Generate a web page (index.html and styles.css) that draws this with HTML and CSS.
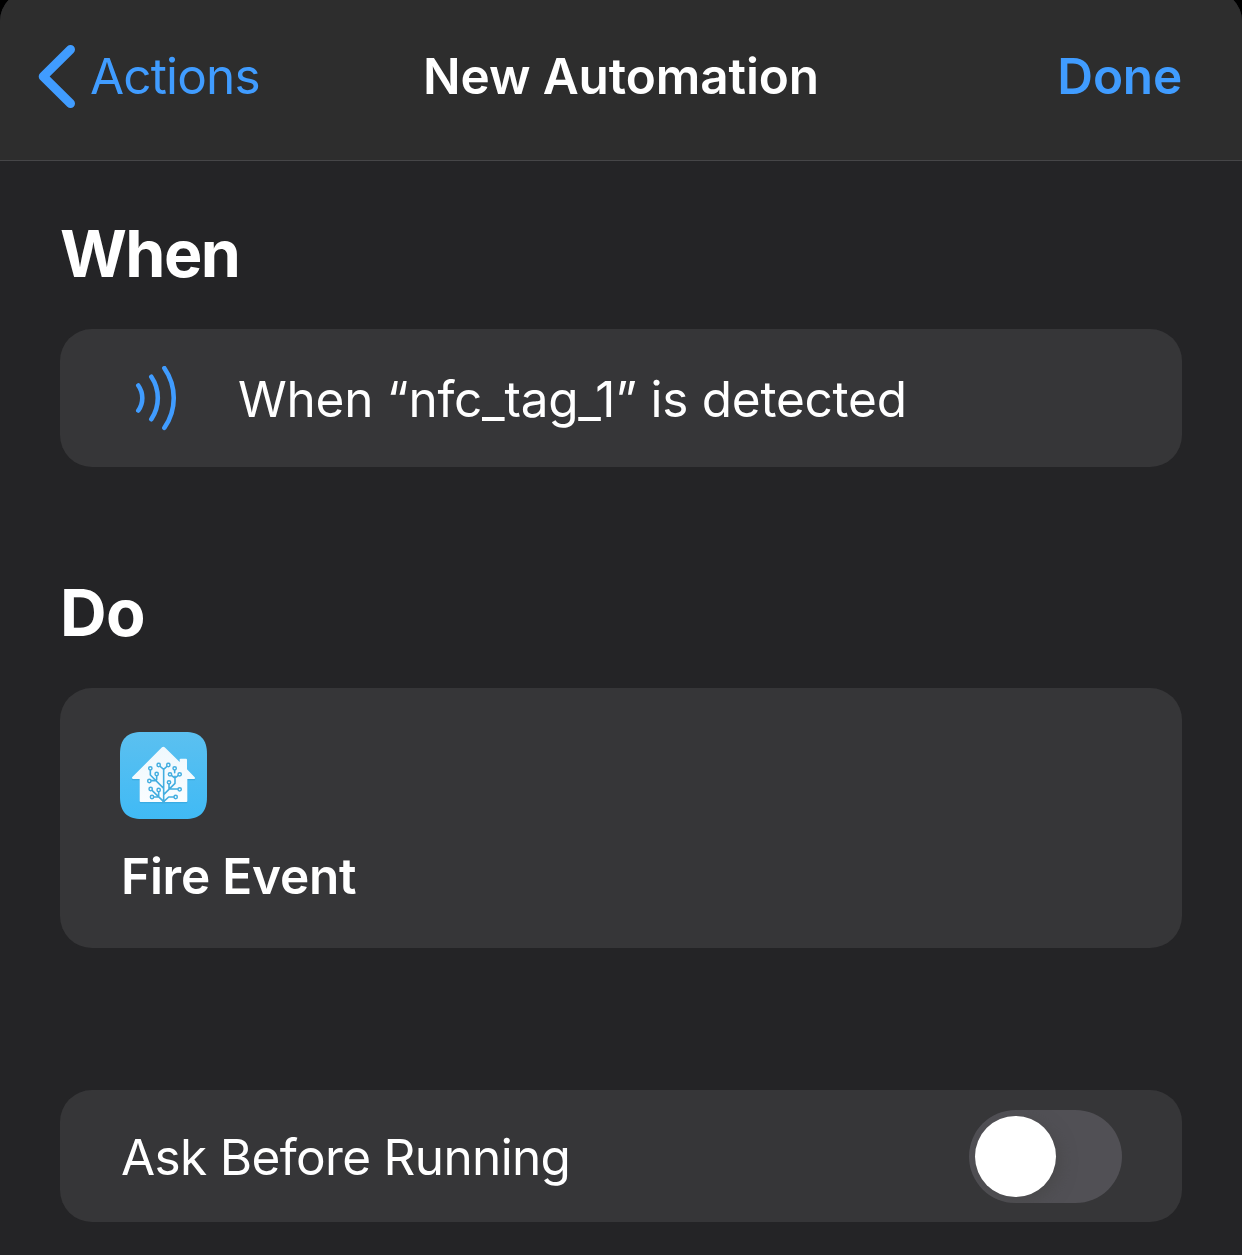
FILE: index.html
```html
<!DOCTYPE html>
<html lang="en">
<head>
<meta charset="utf-8">
<title>New Automation</title>
<link rel="stylesheet" href="styles.css">
</head>
<body>
<div class="sheet">
  <header class="navbar">
    <a class="back">
      <svg class="back-icon" viewBox="0 0 38 64" fill="none" stroke="currentColor" stroke-width="9" stroke-linecap="round" stroke-linejoin="round"><path d="M32.5 5.5 5.2 32.5l27.3 27"/></svg>
      <span class="back-label">Actions</span>
    </a>
    <h1 class="title">New Automation</h1>
    <a class="done">Done</a>
  </header>
  <main class="content">
    <h2 class="heading heading-when">When</h2>
    <section class="card trigger">
      <svg class="waves" viewBox="135 366 44 66" fill="none" stroke="currentColor" stroke-width="4.6" stroke-linecap="round"><path d="M138.3 385.5a21.5 21.5 0 0 1 0 25M151.3 376.8a37.8 37.8 0 0 1 0 42.4M164.4 368.2a52.2 52.2 0 0 1 0 59.6"/></svg>
      <span class="trigger-label">When “nfc_tag_1” is detected</span>
    </section>
    <h2 class="heading heading-do">Do</h2>
    <section class="card action">
      <svg class="app-icon" viewBox="30 30 261 261">
        <defs>
          <linearGradient id="sky" x1="0" y1="0" x2="0" y2="1"><stop offset="0" stop-color="#5bc0f0"/><stop offset="1" stop-color="#40baf5"/></linearGradient>
          <linearGradient id="wall" x1="0" y1="0" x2="0" y2="1"><stop offset="0" stop-color="#eff8fd"/><stop offset="1" stop-color="#fafdff"/></linearGradient>
        </defs>
        <path fill="url(#sky)" d="M96 30H225C270 30 291 51 291 96V225C291 270 270 291 225 291H96C51 291 30 270 30 225V96C30 51 51 30 96 30Z"/>
        <path fill="#2f9fd6" opacity=".55" transform="translate(0 4)" d="M156 76Q160 72 164 76L209 120V112Q209 110 212 110H228Q231 110 231 113V142L254 166Q257 171 252 171H232V237Q232 240 229 240H92Q89 240 89 237V171H69Q64 170 67 165Z"/>
        <path fill="url(#wall)" d="M156 76Q160 72 164 76L209 120V112Q209 110 212 110H228Q231 110 231 113V142L254 166Q257 171 252 171H232V237Q232 240 229 240H92Q89 240 89 237V171H69Q64 170 67 165Z"/>
        <g fill="none" stroke="#43aee0" stroke-width="4.8" stroke-linecap="round" stroke-linejoin="round">
          <path d="M161 239V142L149 132M161 142 172 132M161 199 121 159V143M124 176H138M140 173V160M161 239 126 205M130 225H145M146 223V208M161 218 195 184V163M195 168 184 160M195 168 205 160M194 152V143M177 201V185M177 201H203M161 239 176 225H192"/>
        </g>
        <g fill="#f4fbff" stroke="#43aee0" stroke-width="4.4">
          <circle cx="146" cy="129" r="5"/><circle cx="175" cy="129" r="5"/><circle cx="121" cy="139" r="5"/><circle cx="194" cy="139" r="5"/><circle cx="140" cy="156" r="5"/><circle cx="180" cy="157" r="5"/><circle cx="209" cy="157" r="5"/><circle cx="118" cy="177" r="5"/><circle cx="177" cy="181" r="5"/><circle cx="122" cy="201" r="5"/><circle cx="146" cy="204" r="5"/><circle cx="209" cy="202" r="5"/><circle cx="126" cy="225" r="5"/><circle cx="197" cy="225" r="5"/>
        </g>
        <path d="M155 242 161 237 167 242Z" fill="#43aee0" stroke="#43aee0" stroke-width="3"/>
      </svg>
      <span class="action-label">Fire Event</span>
    </section>
    <section class="card confirm">
      <span class="confirm-label">Ask Before Running</span>
      <span class="switch" role="switch" aria-checked="false"><span class="knob"></span></span>
    </section>
  </main>
</div>
</body>
</html>
```
FILE: styles.css
```css
* {
  box-sizing: border-box;
}

html {
  background: #000;
}

body {
  display: flow-root;
  height: 1255px;
  margin: 0;
  overflow: hidden;
  color: #fff;
  font-family: Inter, "Liberation Sans", sans-serif;
  font-size: 49.5px;
  line-height: 60px;
  white-space: nowrap;
}

/* The sheet's top edge sits just above the window. */
.sheet {
  height: 1264px;
  margin-top: -9px;
  overflow: hidden;
  background: #242426;
  border-radius: 30px 30px 0 0;
}

.navbar {
  display: grid;
  grid-template-columns: 1fr auto 1fr;
  align-items: center;
  height: 170px;
  padding: 9px 38px 8px;
  background: #2d2d2d;
  border-bottom: 1px solid #464648;
}

.back {
  display: flex;
  align-items: center;
  gap: 14px;
  color: #409cff;
}

.back-icon {
  width: 38px;
  height: 64px;
}

.back-label {
  letter-spacing: -0.85px;
}

.title {
  margin: 0;
  font-size: 49.5px;
  font-weight: 600;
  letter-spacing: -0.1px;
}

.done {
  justify-self: end;
  margin-right: 22px;
  color: #409cff;
  font-weight: 600;
  letter-spacing: -0.2px;
}

.content {
  display: flex;
  flex-direction: column;
  padding: 53px 60px 0;
}

.heading {
  margin: 0;
  font-size: 64.5px;
  font-weight: 700;
  line-height: 80px;
}

.heading-when {
  letter-spacing: -1.6px;
}

.card {
  display: flex;
  background: #363638;
  border-radius: 32px;
}

.trigger {
  align-items: center;
  height: 138px;
  margin-top: 35px;
  padding: 1px 60px 0 75px;
}

.waves {
  width: 44px;
  height: 66px;
  margin-right: 59px;
  color: #409cff;
}

.trigger-label {
  letter-spacing: -0.24px;
}

.heading-do {
  margin-top: 106px;
  letter-spacing: -0.5px;
}

.action {
  flex-direction: column;
  gap: 27px;
  height: 260px;
  margin-top: 35px;
  padding: 44px 60px 0;
}

.app-icon {
  width: 87px;
  height: 87px;
}

.action-label {
  padding-left: 1px;
  font-weight: 600;
  letter-spacing: -0.22px;
}

.confirm {
  align-items: center;
  justify-content: space-between;
  height: 132px;
  margin-top: 142px;
  padding: 0 60px 0 61px;
}

.confirm-label {
  padding-top: 2px;
  letter-spacing: -0.65px;
}

.switch {
  width: 153px;
  height: 93px;
  padding: 6px;
  overflow: hidden;
  background: #515055;
  border-radius: 47px;
}

.knob {
  display: block;
  width: 81px;
  height: 81px;
  background: #fff;
  border-radius: 50%;
  box-shadow: 4px 5px 16px rgba(70, 70, 70, 0.7);
}
```
